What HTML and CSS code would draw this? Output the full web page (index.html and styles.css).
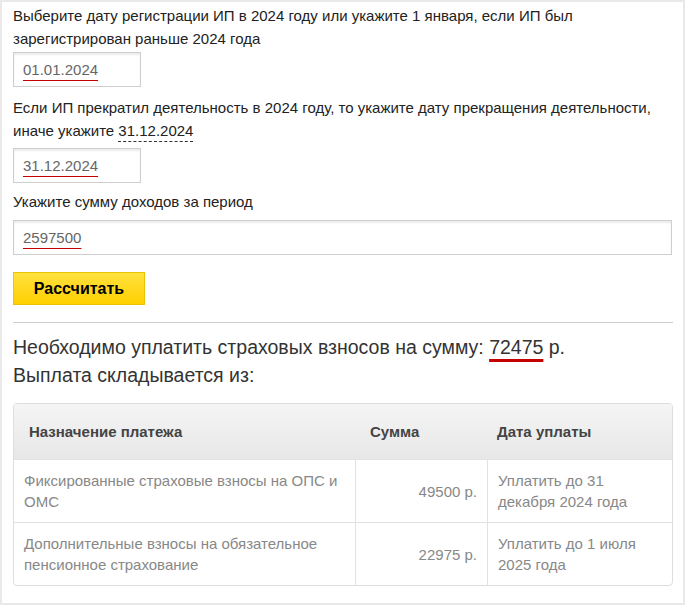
FILE: index.html
```html
<!DOCTYPE html>
<html lang="ru">
<head>
<meta charset="utf-8">
<link rel="stylesheet" href="styles.css">
</head>
<body>
<div class="calc">
  <p class="label first">Выберите дату регистрации ИП в 2024 году или укажите 1 января, если ИП был зарегистрирован раньше 2024 года</p>
  <div class="field short"><span class="val">01.01.2024</span></div>
  <p class="label">Если ИП прекратил деятельность в 2024 году, то укажите дату прекращения деятельности, иначе укажите <span class="dashed">31.12.2024</span></p>
  <div class="field short second"><span class="val">31.12.2024</span></div>
  <p class="label single">Укажите сумму доходов за период</p>
  <div class="field wide"><span class="val">2597500</span></div>
  <button class="btn">Рассчитать</button>
  <hr class="sep">
  <p class="result">Необходимо уплатить страховых взносов на сумму: <span class="total">72475</span> р.<br>Выплата складывается из:</p>
  <div class="table">
    <div class="row head">
      <div class="c c1">Назначение платежа</div>
      <div class="c c2">Сумма</div>
      <div class="c c3">Дата уплаты</div>
    </div>
    <div class="row">
      <div class="c c1">Фиксированные страховые взносы на ОПС и ОМС</div>
      <div class="c c2 num">49500 р.</div>
      <div class="c c3">Уплатить до 31 декабря 2024 года</div>
    </div>
    <div class="row">
      <div class="c c1">Дополнительные взносы на обязательное пенсионное страхование</div>
      <div class="c c2 num">22975 р.</div>
      <div class="c c3">Уплатить до 1 июля 2025 года</div>
    </div>
  </div>
</div>
</body>
</html>
```
FILE: styles.css
```css
html, body {
  margin: 0;
  padding: 0;
  background: #fff;
}
body {
  font-family: "Liberation Sans", Arial, sans-serif;
  font-size: 15px;
  color: #333;
}
.calc {
  box-sizing: border-box;
  width: 685px;
  height: 605px;
  border: 2px solid #e9e9e9;
  padding: 2px 10px 0 11px;
  display: flex;
  flex-direction: column;
  align-items: flex-start;
}
.label {
  margin: 0;
  line-height: 23px;
  color: #222;
}
.label:not(.first) { margin-top: 9px; }
.label.single { margin-top: 7px; }
.dashed {
  text-decoration: underline dashed #333;
  text-decoration-thickness: 1px;
  text-underline-offset: 5px;
}
.field {
  box-sizing: border-box;
  height: 35px;
  margin-top: 2px;
  border: 1px solid #cfcfcf;
  box-shadow: inset 0 2px 2px rgba(0,0,0,0.08);
  padding: 0 9px;
  display: flex;
  align-items: center;
  color: #666;
  font-size: 15px;
}
.field.short { width: 128px; }
.field.second { margin-top: 6px; }
.field.wide { width: 659px; margin-top: 7px; }
.val {
  text-decoration: underline;
  text-decoration-color: #c40000;
  text-underline-offset: 5px;
}
.btn {
  margin-top: 17px;
  width: 132px;
  height: 33px;
  box-sizing: border-box;
  border: 1px solid #eac500;
  background: linear-gradient(#ffe23f, #ffd000);
  font-family: "Liberation Sans", Arial, sans-serif;
  font-weight: bold;
  font-size: 16px;
  color: #000;
  padding: 0;
  cursor: pointer;
}
.sep {
  align-self: stretch;
  margin: 17px 0 0 0;
  border: 0;
  border-top: 1px solid #cccccc;
  height: 0;
}
.result {
  margin: 10px 0 0 0;
  font-size: 19.5px;
  line-height: 28px;
  color: #333;
}
.total {
  text-decoration: underline;
  text-decoration-color: #c40000;
  text-decoration-thickness: 3px;
  text-underline-offset: 5px;
}
.table {
  align-self: stretch;
  margin-top: 14px;
  border: 1px solid #dedede;
  border-radius: 4px;
  overflow: hidden;
}
.row {
  display: grid;
  grid-template-columns: 341px 132px 1fr;
  border-top: 1px solid #e2e2e2;
}
.row.head {
  border-top: 0;
  background: linear-gradient(#f5f5f5, #e7e7e7);
  height: 55px;
}
.c {
  padding: 0 10px;
  line-height: 21px;
  color: #888;
  display: flex;
  align-items: center;
  height: 62px;
}
.row .c + .c { border-left: 1px solid #e2e2e2; }
.row.head .c + .c { border-left: 0; }
.head .c {
  height: 55px;
  font-weight: bold;
  color: #444;
}
.head .c1 { padding-left: 15px; }
.head .c2 { padding-left: 15px; }
.num { justify-content: flex-end; }
```
